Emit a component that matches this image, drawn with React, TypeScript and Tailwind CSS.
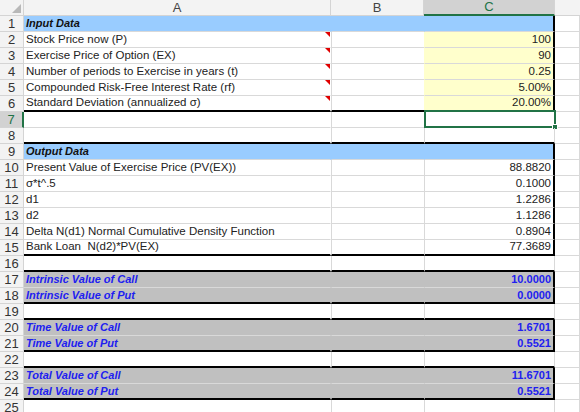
import React from "react";

type Kind = "inputHead" | "input" | "blank" | "outHead" | "out" | "total";

interface Row {
    n: number;
    a?: string;
    c?: string;
    kind: Kind;
}

const rows: Row[] = [
    { n: 1, a: "Input Data", kind: "inputHead" },
    { n: 2, a: "Stock Price now (P)", c: "100", kind: "input" },
    { n: 3, a: "Exercise Price of Option (EX)", c: "90", kind: "input" },
    { n: 4, a: "Number of periods to Exercise in years (t)", c: "0.25", kind: "input" },
    { n: 5, a: "Compounded Risk-Free Interest Rate (rf)", c: "5.00%", kind: "input" },
    { n: 6, a: "Standard Deviation (annualized σ)", c: "20.00%", kind: "input" },
    { n: 7, kind: "blank" },
    { n: 8, kind: "blank" },
    { n: 9, a: "Output Data", kind: "outHead" },
    { n: 10, a: "Present Value of Exercise Price (PV(EX))", c: "88.8820", kind: "out" },
    { n: 11, a: "σ*t^.5", c: "0.1000", kind: "out" },
    { n: 12, a: "d1", c: "1.2286", kind: "out" },
    { n: 13, a: "d2", c: "1.1286", kind: "out" },
    { n: 14, a: "Delta N(d1) Normal Cumulative Density Function", c: "0.8904", kind: "out" },
    { n: 15, a: "Bank Loan  N(d2)*PV(EX)", c: "77.3689", kind: "out" },
    { n: 16, kind: "blank" },
    { n: 17, a: "Intrinsic Value of Call", c: "10.0000", kind: "total" },
    { n: 18, a: "Intrinsic Value of Put", c: "0.0000", kind: "total" },
    { n: 19, kind: "blank" },
    { n: 20, a: "Time Value of Call", c: "1.6701", kind: "total" },
    { n: 21, a: "Time Value of Put", c: "0.5521", kind: "total" },
    { n: 22, kind: "blank" },
    { n: 23, a: "Total Value of Call", c: "11.6701", kind: "total" },
    { n: 24, a: "Total Value of Put", c: "0.5521", kind: "total" },
    { n: 25, kind: "blank" },
];

// rows whose bottom edge carries a thick rule (box tops and bottoms)
const thickBottom = [6, 8, 15, 16, 18, 19, 21, 22, 24];
const thickRight = [1, 2, 3, 4, 5, 6, 9, 10, 11, 12, 13, 14, 15, 17, 18, 20, 21, 23, 24];

const font = { fontFamily: '"Liberation Sans", Arial, sans-serif' };

const ColHeader: React.FC<{ label: string; width: string; selected?: boolean }> = ({ label, width, selected }) => (
    <div
        className={`${width} h-full flex items-center justify-center text-[13px] border-r border-[#d4d4d4] ${
            selected
                ? "bg-[#d2d2d2] text-[#217346] border-b-2 border-b-[#217346]"
                : "bg-[#f3f3f3] text-[#444] border-b border-b-[#d4d4d4]"
        }`}
    >
        {label}
    </div>
);

const SheetRow: React.FC<{ row: Row }> = ({ row }) => {
    const bottom = thickBottom.includes(row.n);
    const right = thickRight.includes(row.n);
    const selected = row.n === 7;
    const bBorder = bottom ? "border-b-2 border-b-black" : "border-b border-b-[#d9d9d9]";

    let fill = "";
    if (row.kind === "inputHead" || row.kind === "outHead") fill = "bg-[#99ccff]";
    if (row.kind === "total") fill = "bg-[#c0c0c0]";

    const textA =
        row.kind === "total"
            ? "text-[11px] font-bold italic text-[#2020f0]"
            : row.kind === "inputHead" || row.kind === "outHead"
            ? "text-[11px] font-bold italic text-[#111]"
            : "text-[11.5px] text-[#222]";
    const textC = row.kind === "total" ? "text-[11px] font-bold text-[#2020f0]" : "text-[11.5px] text-[#222]";
    const fillC = row.kind === "input" ? "bg-[#ffffcc]" : fill;

    return (
        <div className="flex h-4" style={font}>
            <div
                className={`w-6 shrink-0 flex items-center justify-center text-[13px] border-b border-b-[#d4d4d4] ${
                    selected
                        ? "bg-[#d2d2d2] text-[#217346] border-r-2 border-r-[#217346]"
                        : "bg-[#f3f3f3] text-[#333] border-r border-r-[#d4d4d4]"
                }`}
            >
                {row.n}
            </div>
            <div className={`relative w-[307px] shrink-0 flex items-center pl-[2px] border-r border-r-transparent ${fill} ${bBorder} ${textA}`}>
                <span className="whitespace-pre">{row.a}</span>
                {row.kind === "input" && (
                    <div className="absolute top-0 right-0 w-0 h-0 border-l-[5px] border-l-transparent border-t-[5px] border-t-[#e00000]" />
                )}
            </div>
            <div className={`w-[93px] shrink-0 border-l ${fill ? "border-l-transparent" : "border-l-[#d9d9d9]"} ${fill} ${bBorder}`} />
            <div
                className={`relative w-[131px] shrink-0 flex items-center justify-end pr-[2px] border-l ${
                    fillC ? "border-l-transparent" : "border-l-[#d9d9d9]"
                } ${fillC} ${bBorder} ${right ? "border-r-2 border-r-black" : "border-r border-r-[#d9d9d9]"} ${textC}`}
            >
                {row.c}
                {selected && (
                    <>
                        <div className="absolute -top-[2px] -left-[1px] -right-[2px] -bottom-[1px] border-2 border-[#217346]" />
                        <div className="absolute -bottom-[3px] -right-[4px] w-[6px] h-[6px] bg-[#217346] border border-white" />
                    </>
                )}
            </div>
            <div className="flex-1 border-b border-b-[#d9d9d9] border-r border-r-[#d9d9d9]" />
        </div>
    );
};

export default function App() {
    return (
        <div className="w-[580px] h-[412px] overflow-hidden bg-white" style={font}>
            <div className="flex h-4">
                <div className="relative w-6 shrink-0 h-full bg-[#f3f3f3] border-r border-b border-[#d4d4d4]">
                    <div className="absolute bottom-[2px] right-[2px] w-0 h-0 border-l-[9px] border-l-transparent border-b-[9px] border-b-[#b8b8b8]" />
                </div>
                <ColHeader label="A" width="w-[307px]" />
                <ColHeader label="B" width="w-[93px]" />
                <ColHeader label="C" width="w-[131px]" selected />
                <div className="flex-1 h-full bg-[#f3f3f3] border-b border-[#d4d4d4]" />
            </div>
            {rows.map((r) => (
                <SheetRow key={r.n} row={r} />
            ))}
        </div>
    );
}
